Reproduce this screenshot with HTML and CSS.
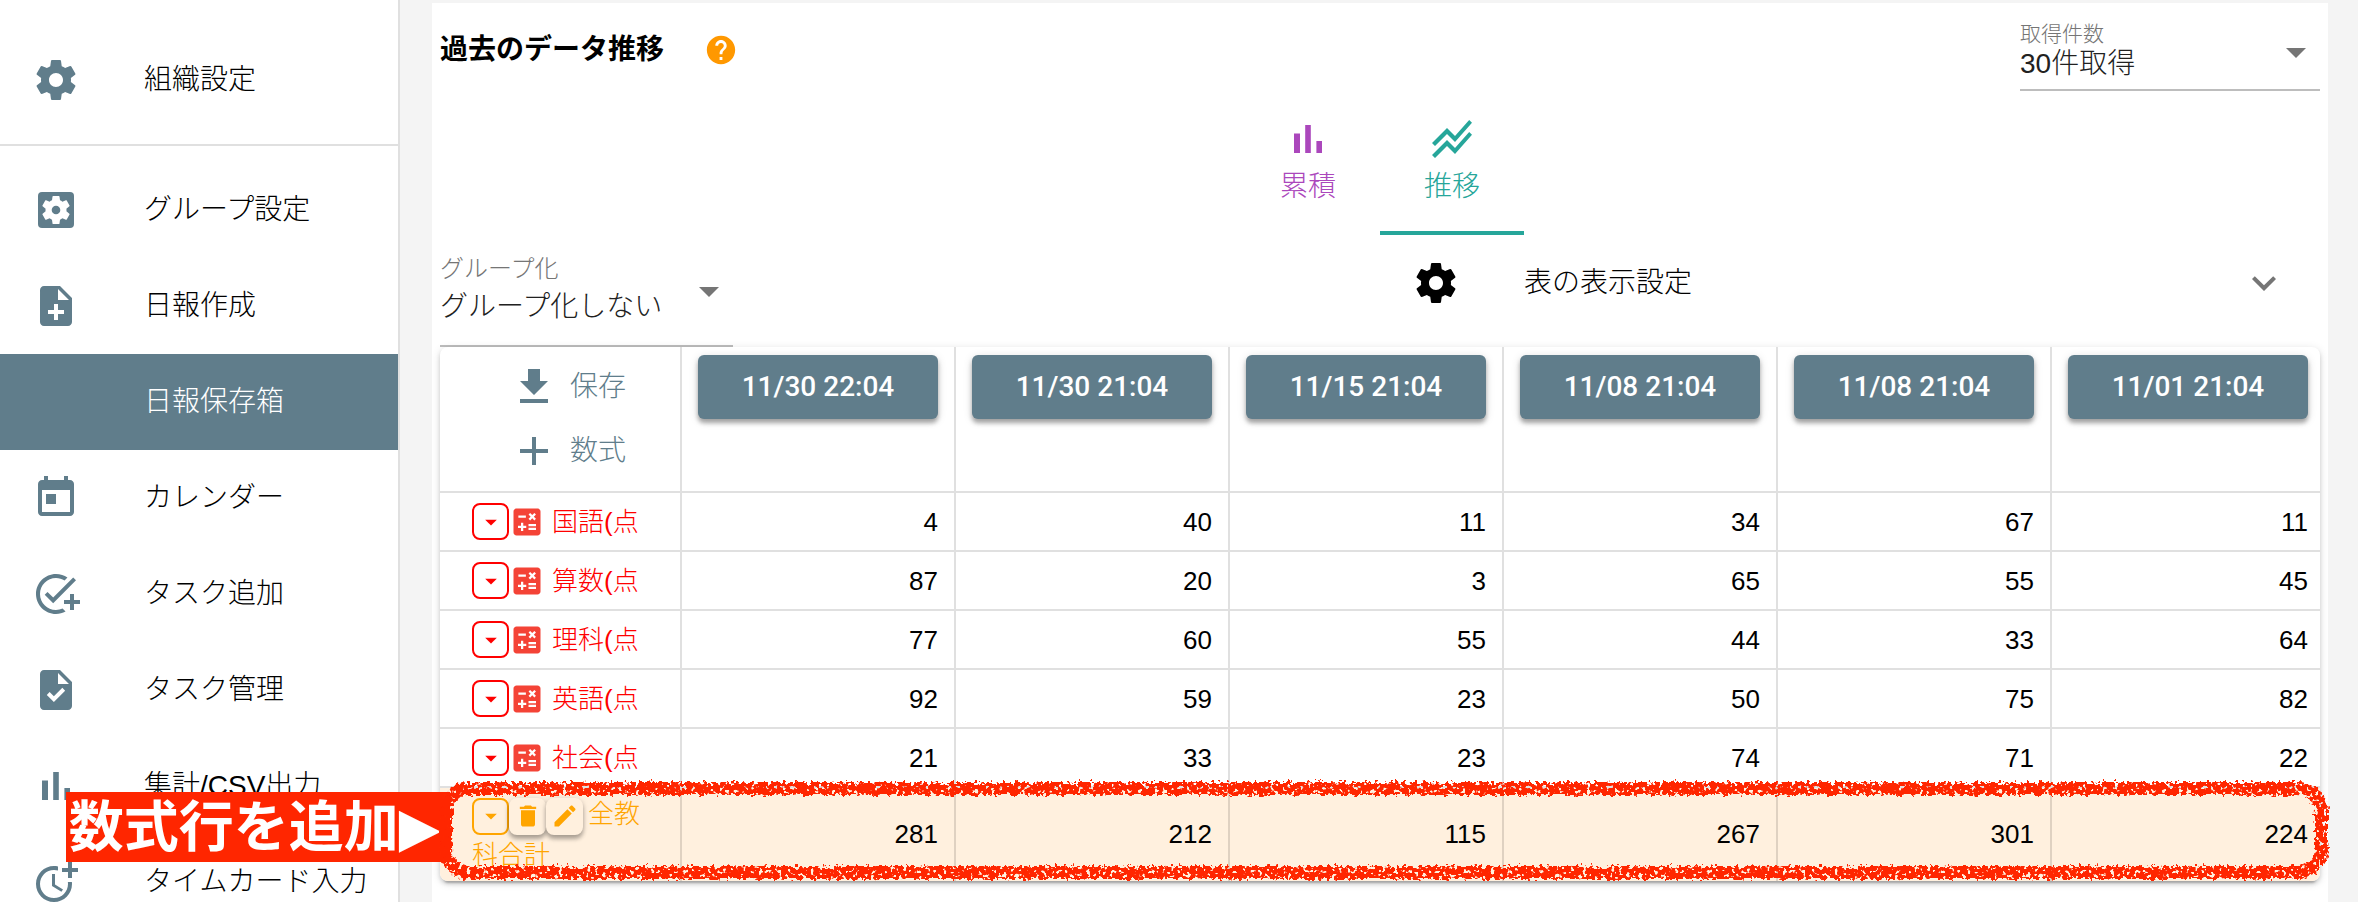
FILE: index.html
```html
<!DOCTYPE html>
<html lang="ja">
<head>
<meta charset="utf-8">
<meta name="viewport" content="width=device-width, initial-scale=1">
<title>日報保存箱</title>
<link rel="stylesheet" href="styles.css">
</head>
<body>
<svg class="sprite" width="0" height="0" aria-hidden="true">
  <defs>
    <symbol id="gear" viewBox="0 0 24 24"><path d="M19.43 12.98c.04-.32.07-.64.07-.98s-.03-.66-.07-.98l2.11-1.65c.19-.15.24-.42.12-.64l-2-3.46c-.12-.22-.39-.3-.61-.22l-2.49 1c-.52-.4-1.08-.73-1.69-.98l-.38-2.65C14.46 2.18 14.25 2 14 2h-4c-.25 0-.46.18-.49.42l-.38 2.65c-.61.25-1.17.59-1.69.98l-2.49-1c-.23-.09-.49 0-.61.22l-2 3.46c-.13.22-.07.49.12.64l2.11 1.65c-.04.32-.07.65-.07.98s.03.66.07.98l-2.11 1.65c-.19.15-.24.42-.12.64l2 3.46c.12.22.39.3.61.22l2.49-1c.52.4 1.08.73 1.69.98l.38 2.65c.03.24.24.42.49.42h4c.25 0 .46-.18.49-.42l.38-2.65c.61-.25 1.17-.59 1.69-.98l2.49 1c.23.09.49 0 .61-.22l2-3.46c.12-.22.07-.49-.12-.64l-2.11-1.65zM12 15.5c-1.93 0-3.5-1.57-3.5-3.5s1.57-3.5 3.5-3.5 3.5 1.57 3.5 3.5-1.57 3.5-3.5 3.5z"/></symbol>
    <symbol id="gear-box" viewBox="0 0 24 24"><rect x="3" y="3" width="18" height="18" rx="2"/><circle cx="12" cy="12" r="4" fill="#fff"/><g fill="#fff" transform="translate(3.6 3.6) scale(.7)"><use href="#gear" width="24" height="24"/></g><circle cx="12" cy="12" r="2.15"/></symbol>
    <symbol id="note-add" viewBox="0 0 24 24"><path d="M14 2H6c-1.1 0-1.99.9-1.99 2L4 20c0 1.1.89 2 1.99 2H18c1.1 0 2-.9 2-2V8l-6-6zm2 14h-3v3h-2v-3H8v-2h3v-3h2v3h3v2zm-3-7V3.5L18.5 9H13z"/></symbol>
    <symbol id="calendar" viewBox="0 0 24 24"><path d="M19 3h-1V1h-2v2H8V1H6v2H5c-1.11 0-1.99.9-1.99 2L3 19c0 1.1.89 2 2 2h14c1.1 0 2-.9 2-2V5c0-1.1-.9-2-2-2zm0 16H5V8h14v11zM7 10h5v5H7z"/></symbol>
    <symbol id="add-task" viewBox="0 0 24 24"><path d="M22 5.18 10.59 16.6l-4.24-4.24 1.41-1.41 2.83 2.83 10-10L22 5.18zM12 20c-4.41 0-8-3.59-8-8s3.59-8 8-8c1.57 0 3.04.46 4.28 1.25l1.45-1.45C16.1 2.67 14.13 2 12 2 6.48 2 2 6.48 2 12s4.48 10 10 10c1.73 0 3.36-.44 4.78-1.22l-1.5-1.5c-1 .46-2.11.72-3.28.72zm7-5h-3v2h3v3h2v-3h3v-2h-3v-3h-2v3z"/></symbol>
    <symbol id="task" viewBox="0 0 24 24"><path d="M14 2H6c-1.1 0-1.99.9-1.99 2L4 20c0 1.1.89 2 1.99 2H18c1.1 0 2-.9 2-2V8l-6-6zm-3.06 16L7.4 14.46l1.41-1.41 2.12 2.12 4.24-4.24 1.41 1.41L10.94 18zM13 9V3.5L18.5 9H13z"/></symbol>
    <symbol id="bars" viewBox="0 0 24 24"><path d="M5 9.2h3V19H5zM10.6 5h2.8v14h-2.8zm5.6 8H19v6h-2.8z"/></symbol>
    <symbol id="more-time" viewBox="0 0 24 24"><path d="M10 8v6l4.7 2.9.8-1.2-4-2.4V8z"/><path d="M17.92 12c.05.33.08.66.08 1 0 3.9-3.1 7-7 7s-7-3.1-7-7 3.1-7 7-7c.7 0 1.37.1 2 .29V4.23c-.64-.15-1.31-.23-2-.23-5 0-9 4-9 9s4 9 9 9 9-4 9-9c0-.34-.02-.67-.06-1h-2.02z"/><path d="M20 5V2h-2v3h-3v2h3v3h2V7h3V5z"/></symbol>
    <symbol id="lines" viewBox="0 0 24 24"><path d="M2 19.99l7.5-7.51 4 4 7.09-7.97L22 9.92l-8.5 9.56-4-4-6 6.01-1.5-1.5zm1.5-4.5l6-6.01 4 4L22 3.92l-1.41-1.41-7.09 7.97-4-4L2 13.99l1.5 1.5z"/></symbol>
    <symbol id="help" viewBox="0 0 24 24"><path d="M12 2C6.48 2 2 6.48 2 12s4.48 10 10 10 10-4.48 10-10S17.52 2 12 2zm1 17h-2v-2h2v2zm2.07-7.75l-.9.92C13.45 12.9 13 13.5 13 15h-2v-.5c0-1.1.45-2.1 1.17-2.83l1.24-1.26c.37-.36.59-.86.59-1.41 0-1.1-.9-2-2-2s-2 .9-2 2H8c0-2.21 1.79-4 4-4s4 1.79 4 4c0 .88-.36 1.68-.93 2.25z"/></symbol>
    <symbol id="drop" viewBox="0 0 24 24"><path d="M7 10l5 5 5-5z"/></symbol>
    <symbol id="chevron" viewBox="0 0 24 24"><path d="M16.59 8.59L12 13.17 7.41 8.59 6 10l6 6 6-6z"/></symbol>
    <symbol id="download" viewBox="0 0 24 24"><path d="M19 9h-4V3H9v6H5l7 7 7-7zM5 18v2h14v-2H5z"/></symbol>
    <symbol id="plus" viewBox="0 0 24 24"><path d="M19 13h-6v6h-2v-6H5v-2h6V5h2v6h6v2z"/></symbol>
    <symbol id="calc" viewBox="0 0 24 24"><path d="M19 3H5c-1.1 0-2 .9-2 2v14c0 1.1.9 2 2 2h14c1.1 0 2-.9 2-2V5c0-1.1-.9-2-2-2zm-5.97 4.06L14.09 6l1.41 1.41L16.91 6l1.06 1.06-1.41 1.41 1.41 1.41-1.06 1.06-1.41-1.4-1.41 1.41-1.06-1.06 1.41-1.41-1.41-1.42zm-6.78.66h5v1.5h-5v-1.5zM11.5 16h-2v2H8v-2H6v-1.5h2v-2h1.5v2h2V16zm6.5 1.25h-5v-1.5h5v1.5zm0-2.5h-5v-1.5h5v1.5z"/></symbol>
    <symbol id="trash" viewBox="0 0 24 24"><path d="M6 19c0 1.1.9 2 2 2h8c1.1 0 2-.9 2-2V7H6v12zM19 4h-3.500l-1-1h-5l-1 1H5v2h14V4z"/></symbol>
    <symbol id="pencil" viewBox="0 0 24 24"><path d="M3 17.250V21h3.750L17.810 9.940l-3.750-3.750L3 17.250zM20.710 7.040c.39-.39.39-1.020 0-1.410l-2.340-2.340c-.39-.39-1.020-.39-1.410 0l-1.830 1.830 3.750 3.750 1.830-1.830z"/></symbol>
    <filter id="crayon" x="-2%" y="-20%" width="104%" height="140%">
      <feTurbulence type="fractalNoise" baseFrequency="0.25" numOctaves="3" seed="4" result="noise"/>
      <feDisplacementMap in="SourceGraphic" in2="noise" scale="9" xChannelSelector="R" yChannelSelector="G" result="rough"/>
      <feColorMatrix in="noise" type="matrix" values="0 0 0 0 0  0 0 0 0 0  0 0 0 0 0  0 0 14 0 -4.6" result="grain"/>
      <feComposite in="rough" in2="grain" operator="in"/>
    </filter>
  </defs>
</svg>

<div class="app">
  <nav class="sidebar">
    <ul class="menu">
      <li><a class="menu-item" href="#org"><svg class="icon"><use href="#gear"/></svg>組織設定</a></li>
    </ul>
    <ul class="menu">
      <li><a class="menu-item" href="#group"><svg class="icon"><use href="#gear-box"/></svg>グループ設定</a></li>
      <li><a class="menu-item" href="#create"><svg class="icon"><use href="#note-add"/></svg>日報作成</a></li>
      <li><a class="menu-item active" href="#box" aria-current="page"><span class="icon"></span>日報保存箱</a></li>
      <li><a class="menu-item" href="#calendar-page"><svg class="icon"><use href="#calendar"/></svg>カレンダー</a></li>
      <li><a class="menu-item" href="#task-add"><svg class="icon"><use href="#add-task"/></svg>タスク追加</a></li>
      <li><a class="menu-item" href="#task-list"><svg class="icon"><use href="#task"/></svg>タスク管理</a></li>
      <li><a class="menu-item" href="#csv"><svg class="icon"><use href="#bars"/></svg>集計/CSV出力</a></li>
      <li><a class="menu-item" href="#timecard"><svg class="icon"><use href="#more-time"/></svg>タイムカード入力</a></li>
    </ul>
  </nav>

  <main class="content">
    <section class="panel">
      <header class="panel-head">
        <div class="heading">
          <h1>過去のデータ推移</h1>
          <button class="help" type="button" aria-label="ヘルプ"><svg><use href="#help"/></svg></button>
        </div>
        <div class="field field-count">
          <label for="count">取得件数</label>
          <select id="count"><option>30件取得</option></select>
          <svg class="icon arrow"><use href="#drop"/></svg>
        </div>
      </header>

      <div class="tabs" role="tablist">
        <button class="tab tab-total" type="button" role="tab" aria-selected="false"><svg class="icon"><use href="#bars"/></svg>累積</button>
        <button class="tab tab-trend" type="button" role="tab" aria-selected="true"><svg class="icon"><use href="#lines"/></svg>推移</button>
      </div>

      <div class="options">
        <div class="field field-group">
          <label for="grouping">グループ化</label>
          <select id="grouping"><option>グループ化しない</option></select>
          <svg class="icon arrow"><use href="#drop"/></svg>
        </div>
        <button class="accordion" type="button" aria-expanded="false">
          <svg class="icon"><use href="#gear"/></svg>
          <span>表の表示設定</span>
          <svg class="icon chevron"><use href="#chevron"/></svg>
        </button>
      </div>

      <div class="table-area">
        <div class="table-card">
          <table>
            <thead>
              <tr>
                <th class="tools" scope="col">
                  <button class="tool" type="button"><svg class="icon"><use href="#download"/></svg>保存</button>
                  <button class="tool" type="button"><svg class="icon"><use href="#plus"/></svg>数式</button>
                </th>
                <th scope="col"><button class="date" type="button">11/30 22:04</button></th>
                <th scope="col"><button class="date" type="button">11/30 21:04</button></th>
                <th scope="col"><button class="date" type="button">11/15 21:04</button></th>
                <th scope="col"><button class="date" type="button">11/08 21:04</button></th>
                <th scope="col"><button class="date" type="button">11/08 21:04</button></th>
                <th scope="col"><button class="date" type="button">11/01 21:04</button></th>
              </tr>
            </thead>
            <tbody>
              <tr>
                <th class="name" scope="row"><div class="name-line"><button class="mini" type="button" aria-label="メニュー"><svg><use href="#drop"/></svg></button><svg class="calc"><use href="#calc"/></svg><span>国語(点</span></div></th>
                <td>4</td><td>40</td><td>11</td><td>34</td><td>67</td><td>11</td>
              </tr>
              <tr>
                <th class="name" scope="row"><div class="name-line"><button class="mini" type="button" aria-label="メニュー"><svg><use href="#drop"/></svg></button><svg class="calc"><use href="#calc"/></svg><span>算数(点</span></div></th>
                <td>87</td><td>20</td><td>3</td><td>65</td><td>55</td><td>45</td>
              </tr>
              <tr>
                <th class="name" scope="row"><div class="name-line"><button class="mini" type="button" aria-label="メニュー"><svg><use href="#drop"/></svg></button><svg class="calc"><use href="#calc"/></svg><span>理科(点</span></div></th>
                <td>77</td><td>60</td><td>55</td><td>44</td><td>33</td><td>64</td>
              </tr>
              <tr>
                <th class="name" scope="row"><div class="name-line"><button class="mini" type="button" aria-label="メニュー"><svg><use href="#drop"/></svg></button><svg class="calc"><use href="#calc"/></svg><span>英語(点</span></div></th>
                <td>92</td><td>59</td><td>23</td><td>50</td><td>75</td><td>82</td>
              </tr>
              <tr>
                <th class="name" scope="row"><div class="name-line"><button class="mini" type="button" aria-label="メニュー"><svg><use href="#drop"/></svg></button><svg class="calc"><use href="#calc"/></svg><span>社会(点</span></div></th>
                <td>21</td><td>33</td><td>23</td><td>74</td><td>71</td><td>22</td>
              </tr>
              <tr class="formula">
                <th class="name" scope="row"><div class="name-flow"><span class="actions"><button class="mini" type="button" aria-label="メニュー"><svg><use href="#drop"/></svg></button><button class="mini raised" type="button" aria-label="削除"><svg><use href="#trash"/></svg></button><button class="mini raised" type="button" aria-label="編集"><svg><use href="#pencil"/></svg></button></span>全教科合計</div></th>
                <td>281</td><td>212</td><td>115</td><td>267</td><td>301</td><td>224</td>
              </tr>
            </tbody>
          </table>
        </div>
        <div class="callout">数式行を追加<span class="pointer">▶</span></div>
        <div class="outline"></div>
      </div>
    </section>
  </main>
</div>
</body>
</html>
```

FILE: styles.css
```css
* { box-sizing: border-box; }

body {
  margin: 0;
  background: #f4f4f4;
  color: #000;
  font-family: "Liberation Sans", "Noto Sans CJK JP", sans-serif;
  font-size: 28px;
  font-weight: 300;
  line-height: 40px;
}

button, select {
  margin: 0;
  padding: 0;
  border: 0;
  background: none;
  color: inherit;
  font: inherit;
}

button { cursor: pointer; }

svg { display: block; fill: currentColor; }

.sprite { position: absolute; }

.icon { flex: none; width: 48px; height: 48px; }

.app { display: flex; height: 100vh; overflow: hidden; }

/* Sidebar */
.sidebar {
  flex: none;
  width: 400px;
  overflow: hidden;
  background: #fff;
  border-right: 2px solid #e0e0e0;
}

.menu { margin: 0; padding: 16px 0; list-style: none; }
.menu + .menu { border-top: 2px solid #e0e0e0; }
.menu:first-child { padding-top: 32px; }

.menu-item {
  display: flex;
  align-items: center;
  gap: 64px;
  height: 96px;
  padding: 0 32px;
  color: #000;
  text-decoration: none;
  white-space: nowrap;
}
.menu-item .icon { color: #607d8b; }
.menu-item.active { background: #607d8b; color: #fff; }

/* Main panel */
.content { flex: 1; min-width: 0; padding: 3px 30px 0 32px; }
.panel { height: 100%; padding: 0 8px; background: #fff; }

.panel-head {
  display: flex;
  justify-content: space-between;
  align-items: flex-start;
  padding-top: 17px;
}
.heading { display: flex; align-items: center; gap: 40px; padding-top: 10px; }
.heading h1 { margin: 0; font-size: 28px; font-weight: 700; line-height: 40px; }
.help { color: #ff9800; }
.help svg { width: 34px; height: 34px; }

.field {
  position: relative;
  display: flex;
  flex-direction: column;
  border-bottom: 2px solid #bdbdbd;
}
.field label { color: #757575; }
.field select { appearance: none; color: #212121; line-height: 32px; }
.arrow { position: absolute; right: 0; color: #757575; pointer-events: none; }

.field-count { width: 300px; }
.field-count label { font-size: 21px; line-height: 28px; }
.field-count select { height: 41px; padding-bottom: 9px; }
.field-count .arrow { top: 8px; }

.field-group { width: 293px; margin-top: 18px; }
.field-group label { font-size: 24px; line-height: 32px; }
.field-group select { height: 60px; padding-bottom: 16px; }
.field-group .arrow { top: 14px; }

.tabs { display: flex; justify-content: center; }
.tab {
  display: flex;
  flex-direction: column;
  align-items: center;
  gap: 10px;
  width: 144px;
  height: 144px;
  padding-top: 24px;
  border-bottom: 4px solid transparent;
  line-height: 28px;
}
.tab-total { color: #ab47bc; }
.tab-trend { color: #26a69a; border-bottom-color: #26a69a; }

.options { display: grid; grid-template-columns: 1fr 1fr; align-items: start; }
.accordion {
  display: flex;
  align-items: center;
  gap: 64px;
  height: 96px;
  padding: 0 32px;
}
.chevron { margin-left: auto; color: #757575; }

/* Table */
.table-area { position: relative; }
.table-card {
  overflow: hidden;
  border-radius: 8px;
  background: #fff;
  box-shadow: 0 6px 2px -4px rgba(0, 0, 0, .2), 0 3px 4px rgba(0, 0, 0, .14), 0 2px 10px rgba(0, 0, 0, .12);
}

table { min-width: 100%; border-collapse: separate; border-spacing: 0; }

th, td {
  border-right: 2px solid #e0e0e0;
  border-bottom: 2px solid #e0e0e0;
  font-weight: 300;
}
tr > :last-child { border-right: 0; }
tbody tr:last-child > * { border-bottom: 0; }

thead th { padding: 8px 16px; vertical-align: top; }

.tool {
  display: flex;
  align-items: center;
  justify-content: center;
  gap: 12px;
  width: 100%;
  height: 64px;
  padding-left: 16px;
  color: #607d8b;
}

.date {
  width: 100%;
  min-width: 240px;
  height: 64px;
  border-radius: 6px;
  background: #607d8b;
  color: #fff;
  font-family: Roboto, "Liberation Sans", sans-serif;
  font-weight: 500;
  white-space: nowrap;
  box-shadow: 0 4px 4px rgba(0, 0, 0, .3), 0 2px 10px rgba(0, 0, 0, .14);
}

td {
  height: 59px;
  padding: 0 16px;
  font-size: 26px;
  text-align: right;
}

.name {
  padding: 0 40px 0 32px;
  color: #f00;
  font-size: 26px;
  text-align: left;
}
.name-line { display: flex; align-items: center; white-space: nowrap; }
.name-line span { padding-left: 7px; }
.calc { width: 36px; height: 36px; color: #f44336; }

.mini {
  display: grid;
  place-items: center;
  width: 37px;
  height: 37px;
  border: 2px solid currentColor;
  border-radius: 8px;
}
.mini svg { width: 28px; height: 28px; }

.formula > * { background: #fff0de; border-right-color: #dfd1c1; }
.formula .name { padding-top: 6px; padding-bottom: 6px; color: #ffa500; }
.name-flow { width: 168px; white-space: normal; }
.actions { display: inline-flex; margin-right: 5px; vertical-align: middle; }
.raised {
  border: 0;
  background: #fff0de;
  box-shadow: 0 4px 4px rgba(0, 0, 0, .28), 0 1px 6px rgba(0, 0, 0, .14);
}

/* Annotation over the formula row */
.callout {
  position: absolute;
  bottom: 19px;
  right: calc(100% - 10px);
  display: flex;
  height: 70px;
  padding: 0 9px 0 3px;
  background: #ff2600;
  color: #fff;
  font-size: 55px;
  font-weight: 700;
  line-height: 70px;
  white-space: nowrap;
}
.pointer { font-family: "DejaVu Sans", sans-serif; font-weight: 400; }

.outline {
  position: absolute;
  right: -8px;
  bottom: 2px;
  left: -1px;
  height: 97px;
  border: 13px solid #ff2600;
  border-radius: 30px;
  filter: url(#crayon);
  pointer-events: none;
}
```
